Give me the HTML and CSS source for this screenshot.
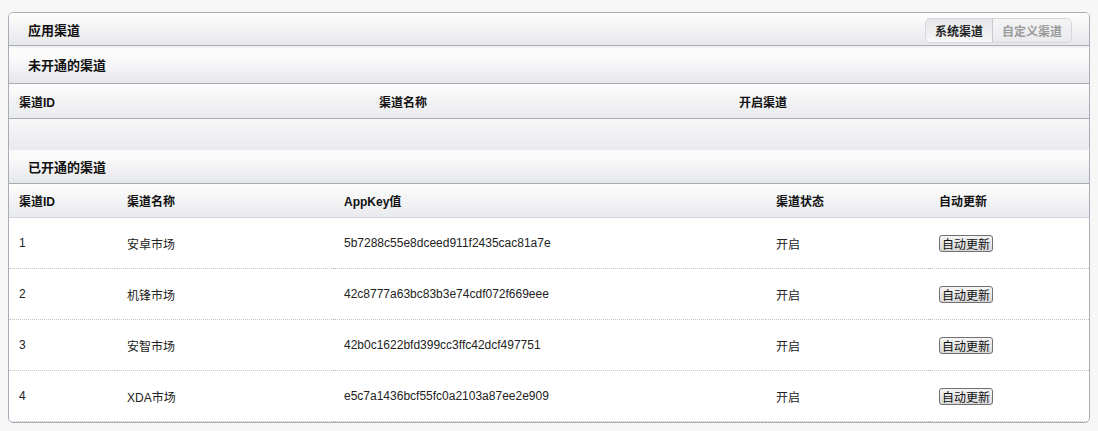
FILE: index.html
```html
<!DOCTYPE html>
<html lang="zh-CN">
<head>
  <meta charset="utf-8">
  <title>应用渠道</title>
  <link rel="stylesheet" href="styles.css">
</head>
<body>
  <div class="panel">
    <!-- Panel title with tabs -->
    <div class="panel-head">
      <h2>应用渠道</h2>
      <div class="tabs">
        <span class="tab active">系统渠道</span>
        <span class="tab">自定义渠道</span>
      </div>
    </div>

    <!-- Channels not yet opened -->
    <div class="section-head">未开通的渠道</div>
    <table class="grid grid-closed">
      <thead>
        <tr>
          <th>渠道ID</th>
          <th>渠道名称</th>
          <th>开启渠道</th>
        </tr>
      </thead>
    </table>
    <div class="empty-row"></div>

    <!-- Opened channels -->
    <div class="section-head section-open">已开通的渠道</div>
    <table class="grid grid-open">
      <thead>
        <tr>
          <th class="col-id">渠道ID</th>
          <th class="col-name">渠道名称</th>
          <th class="col-key">AppKey值</th>
          <th class="col-state">渠道状态</th>
          <th>自动更新</th>
        </tr>
      </thead>
      <tbody>
        <tr>
          <td>1</td>
          <td>安卓市场</td>
          <td>5b7288c55e8dceed911f2435cac81a7e</td>
          <td>开启</td>
          <td><button>自动更新</button></td>
        </tr>
        <tr>
          <td>2</td>
          <td>机锋市场</td>
          <td>42c8777a63bc83b3e74cdf072f669eee</td>
          <td>开启</td>
          <td><button>自动更新</button></td>
        </tr>
        <tr>
          <td>3</td>
          <td>安智市场</td>
          <td>42b0c1622bfd399cc3ffc42dcf497751</td>
          <td>开启</td>
          <td><button>自动更新</button></td>
        </tr>
        <tr>
          <td>4</td>
          <td>XDA市场</td>
          <td>e5c7a1436bcf55fc0a2103a87ee2e909</td>
          <td>开启</td>
          <td><button>自动更新</button></td>
        </tr>
      </tbody>
    </table>
  </div>
</body>
</html>
```

FILE: styles.css
```css
body {
  font-family: "Liberation Sans", Arial, "Noto Sans CJK SC", sans-serif;
  font-size: 12px;
  color: #222;
  background-color: #f7f7f7;
  margin: 12px 8px;
}

.panel {
  width: 1080px;
  border: 1px solid #a9abb7;
  border-radius: 5px;
  background-color: #fff;
  overflow: hidden;
}

.panel-head {
  height: 32px;
  display: flex;
  align-items: center;
  justify-content: space-between;
  padding: 0 17px 0 19px;
  background: linear-gradient(#fdfdfd, #e7e8eb);
  border-bottom: 1px solid #a9abb7;
}

.panel-head h2 {
  margin: 0;
  font-size: 13px;
  font-weight: bold;
  color: #111;
}

.tabs {
  display: flex;
  height: 23px;
  margin-top: 2px;
  border: 1px solid #d6d7dc;
  border-radius: 5px;
  background: linear-gradient(#f4f4f5, #e9eaed);
  overflow: hidden;
}

.tab {
  display: flex;
  align-items: center;
  padding: 0 9px;
  font-size: 12px;
  font-weight: bold;
  color: #9a9a9a;
}

.tab.active {
  color: #222;
  background: linear-gradient(#e4e5e8, #f7f7f8);
  border-right: 1px solid #c9cad0;
}

.section-head {
  height: 37px;
  display: flex;
  align-items: center;
  padding-left: 19px;
  font-size: 13px;
  font-weight: bold;
  color: #111;
  background: linear-gradient(#eeeef0 0, #fbfbfc 3px, #fbfbfc 30%, #e6e7ea);
  border-bottom: 1px solid #a9abb7;
}

.section-open {
  height: 33px;
  background: linear-gradient(#fbfbfc, #fbfbfc 20%, #e6e7ea);
}

.grid {
  width: 100%;
  border-collapse: collapse;
  table-layout: fixed;
}

.grid th {
  height: 34px;
  padding: 0 0 0 10px;
  text-align: left;
  font-size: 12px;
  font-weight: bold;
  color: #111;
  background: linear-gradient(#fdfdfd, #e9eaed);
  border-bottom: 1px solid #a9abb7;
}

.grid-open th {
  height: 33px;
  border-bottom-color: #cfd2da;
}

.grid td {
  height: 50px;
  padding: 0 0 0 10px;
  color: #222;
  border-bottom: 1px dotted #c4c4c4;
}

.col-id {
  width: 98px;
}

.col-name {
  width: 207px;
}

.col-key {
  width: 422px;
}

.col-state {
  width: 153px;
}

.empty-row {
  height: 31px;
  background: linear-gradient(#f7f7f8, #e9eaed);
  border-radius: 0 0 5px 5px;
  box-shadow: 0 1px 1px #d8d9de;
}

button {
  font-family: "Noto Sans CJK SC", sans-serif;
  font-size: 12px;
  line-height: 15px;
  padding: 0 2px;
  color: #111;
  background: linear-gradient(#f5f5f5, #d9d9d9);
  border: 1px solid #707070;
  border-radius: 3px;
}
```
